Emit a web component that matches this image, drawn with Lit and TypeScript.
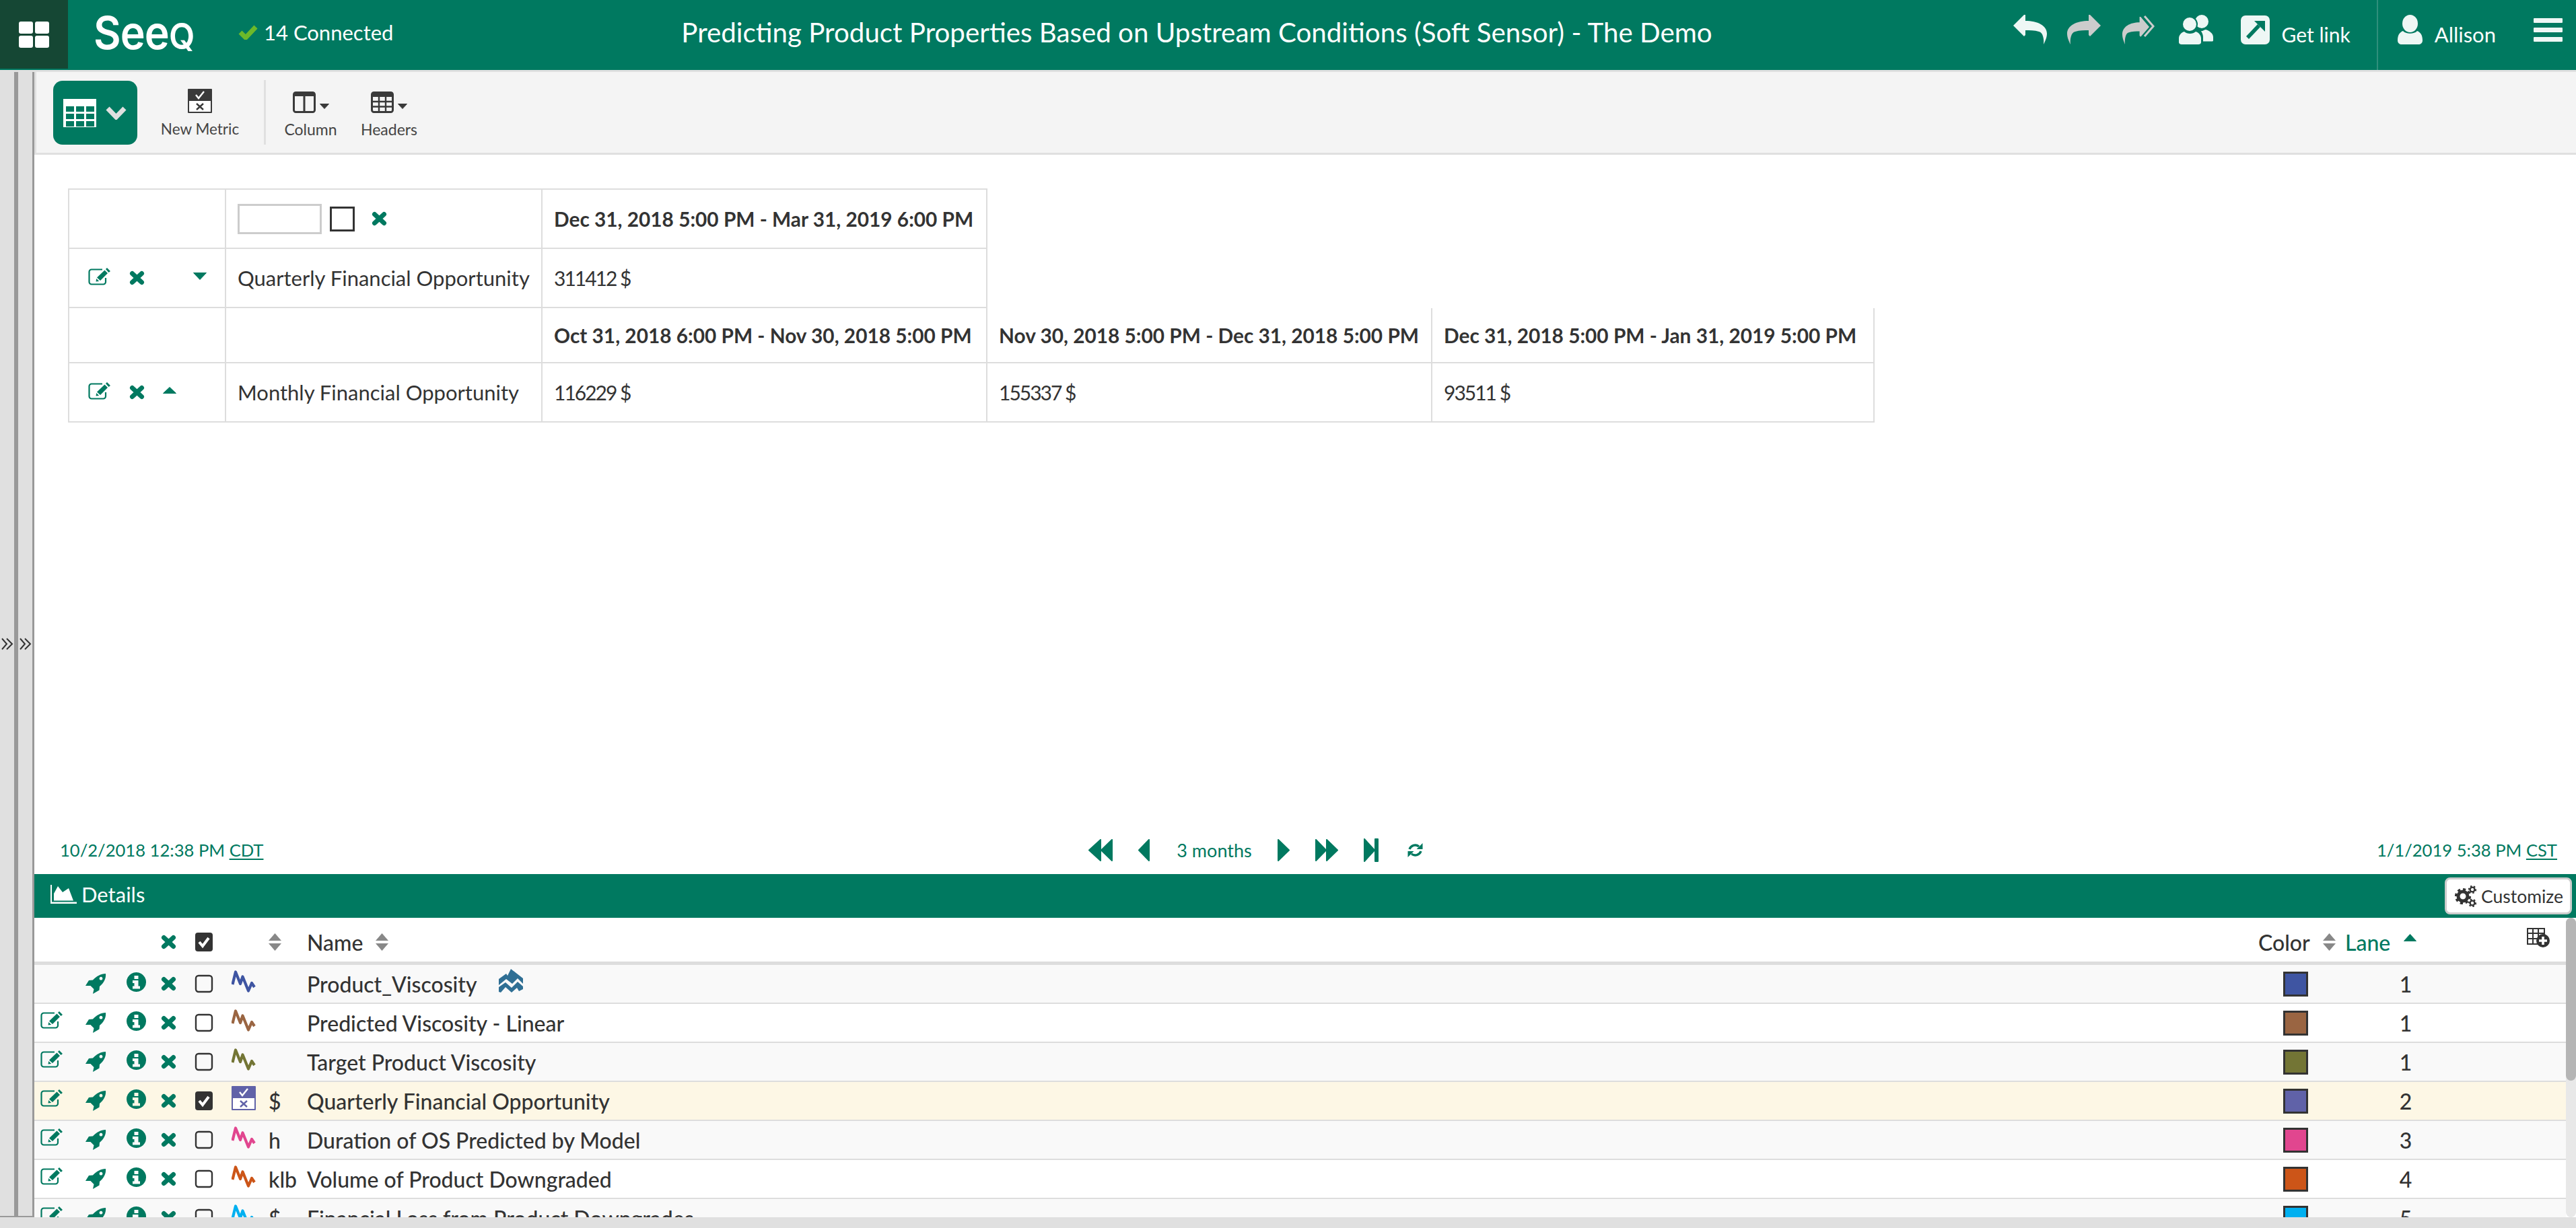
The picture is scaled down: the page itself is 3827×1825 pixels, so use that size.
import { LitElement, html, css, svg } from 'lit';
import { customElement } from 'lit/decorators.js';

const GREEN = '#007960';
const DARK = '#3a3a3a';

const icon = (w: number, h: number, body: unknown, cls = '') =>
  html`<svg class="ic ${cls}" width=${w} height=${h} viewBox="0 0 ${w} ${h}">${body}</svg>`;

const timesIcon = (cls = '') =>
  icon(23, 22, svg`<path d="M4.5 4.5 L18.5 17.5 M18.5 4.5 L4.5 17.5" stroke=${GREEN} stroke-width="7" stroke-linecap="round" fill="none"/>`, cls);

const editIcon = (cls = '') =>
  icon(34, 27, svg`
    <path d="M26 16 V22 a3.5 3.5 0 0 1 -3.5 3.5 H5 a3.5 3.5 0 0 1 -3.5 -3.5 V7 A3.5 3.5 0 0 1 5 3.5 H21" stroke=${GREEN} stroke-width="2.2" fill="none"/>
    <path d="M13 15.5 L24.5 4.5 L29 9 L18 20 Z M26 3 L28 1 L33 6 L30.5 8 Z M11.5 21.5 L12.2 17 L16.2 21 Z" fill=${GREEN}/>`, cls);

const rocketIcon = () =>
  icon(31, 30, svg`<path fill-rule="evenodd" fill=${GREEN} d="M30 0 C31 7 27 14 21 19 L20.5 24.5 L11 30 L12.5 23 L7.5 18 L0 18 L5 10 L11 9.5 C16 4 23 0 30 0 Z M23 4.8 a2.4 2.4 0 1 0 0.01 0 Z"/>`, 'rocket');

const infoIcon = () =>
  icon(29, 29, svg`<path fill-rule="evenodd" fill=${GREEN} d="M14.5 0 a14.5 14.5 0 1 0 0.01 0 Z M11.5 5 h6 v5 h-6 Z M9 12 h8.5 v8.5 h2.5 v4 H9 v-4 h2.5 v-4.5 H9 Z"/>`, 'info');

const checkbox = (checked: boolean, cls = '') =>
  icon(28, 28, checked
    ? svg`<rect x="1" y="0" width="26" height="28" rx="4" fill="#333"/><path d="M7 14 L12 20 L21 8" stroke="#fff" stroke-width="4" fill="none"/>`
    : svg`<rect x="2" y="2" width="24" height="24" rx="4" fill="none" stroke="#333" stroke-width="2.4"/>`, cls);

const signalIcon = (color: string) =>
  icon(36, 33, svg`<polyline points="1.5,21 6,2.5 13,20 16.5,9.5 25,30.5 30,19 34,25" fill="none" stroke=${color} stroke-width="4.2" stroke-linejoin="round"/>`, 'signal');

const metricIcon = (color: string, cls = 'signal') =>
  icon(36, 36, svg`
    <rect width="36" height="36" rx="1" fill=${color}/>
    <rect x="2" y="18" width="32" height="16" fill="#fff"/>
    <path d="M12 9 L16 14 L24 4" stroke="#fff" stroke-width="2.4" fill="none"/>
    <path d="M13 22 L23 31 M23 22 L13 31" stroke=${color} stroke-width="2.4" fill="none"/>`, cls);

const assetIcon = () =>
  icon(36, 35, svg`<path fill="#2f6f94" d="M0 15 L11 7 L13 10 L18 0 L27 7 L36 14 V22 L28 14 L20 22 L11 15 L0 24 Z M0 27 L10 20 L19 28 L28 19 L36 26 V30 L30 33 L27 28 L19 35 L10 27 L3 35 L0 34 Z"/>`, 'asset');

const sortIcon = (color = '#888') =>
  icon(19, 26, svg`<path fill=${color} d="M9.5 0 L19 11 H0 Z M0 15 H19 L9.5 26 Z"/>`, 'sort');

const caret = (w: number, h: number, up: boolean, color: string, cls = '') =>
  icon(w, h, svg`<path fill=${color} stroke=${color} stroke-width="1" stroke-linejoin="round" d=${up ? `M${w / 2} 0.5 L${w - 0.5} ${h - 0.5} H0.5 Z` : `M0.5 0.5 H${w - 0.5} L${w / 2} ${h - 0.5} Z`}/>`, cls);

const replyPath = 'M0 16 L16 0 H18 V9 C36 9 50 16 50 28 C50 34 47 40 45 44 C46 36 44 26 38 25 C32 23 24 23 18 23 V30 L16 32 Z';

const undoIcon = () => icon(50, 44, svg`<path fill="#eef7f5" d=${replyPath}/>`);
const redoIcon = () => icon(50, 44, svg`<path fill="#ccc" transform="translate(50 0) scale(-1 1)" d=${replyPath}/>`);
const forwardIcon = () =>
  icon(51, 44, svg`
    <path fill="#ccc" transform="translate(41 3) scale(-0.8 0.93)" d=${replyPath}/>
    <path fill="none" stroke="#ccc" stroke-width="3" d="M34 2 L47 17 L34 32"/>`, 'fwd');

const usersIcon = () =>
  icon(51, 44, svg`
    <circle cx="34" cy="10" r="10" fill="#eef7f5"/>
    <path fill="#eef7f5" d="M37 23 C38 22.5 38 22.5 40 22 C46 24 51 28 51 33 V38 C51 39 50 39.5 49 39.5 H36 V33 C36 29 34 26 33 24 C34 24 36 24 37 23 Z"/>
    <circle cx="16" cy="14" r="11" fill="#eef7f5" stroke=${GREEN} stroke-width="2"/>
    <path fill="#eef7f5" d="M0 41 V35 C0 30 4 26 8 25 C12 29 21 29 25 25 C29 26 33 30 33 35 V41 C33 43 31 44 29 44 H4 C2 44 0 43 0 41 Z"/>`, 'users');

const linkIcon = () =>
  icon(43, 43, svg`
    <rect width="43" height="43" rx="7" fill="#eef7f5"/>
    <path d="M10 33 L27 15" stroke=${GREEN} stroke-width="5.5"/>
    <path d="M20 8 H36 V24 Z" fill=${GREEN}/>`, 'linkic');

const userIcon = () =>
  icon(37, 44, svg`
    <ellipse cx="18.5" cy="13" rx="11.5" ry="13" fill="#eef7f5"/>
    <path fill="#eef7f5" d="M0 38 C0 30 3 26 8 24 C12 29 25 29 29 24 C34 26 37 30 37 38 C37 42 34 44 31 44 H6 C3 44 0 42 0 38 Z"/>`);

const barsIcon = () =>
  icon(43, 35, svg`<path fill="#eef7f5" d="M1 0 H42 a1 1 0 0 1 1 1 V6 a1 1 0 0 1 -1 1 H1 a1 1 0 0 1 -1 -1 V1 a1 1 0 0 1 1 -1 Z M1 14 H42 a1 1 0 0 1 1 1 V20 a1 1 0 0 1 -1 1 H1 a1 1 0 0 1 -1 -1 V15 a1 1 0 0 1 1 -1 Z M1 28 H42 a1 1 0 0 1 1 1 V34 a1 1 0 0 1 -1 1 H1 a1 1 0 0 1 -1 -1 V29 a1 1 0 0 1 1 -1 Z"/>`);

const gridIcon = () =>
  icon(45, 39, svg`
    <rect width="21" height="18" rx="3" fill="#fff"/><rect x="24" width="21" height="18" rx="3" fill="#fff"/>
    <rect y="21" width="21" height="18" rx="3" fill="#fff"/><rect x="24" y="21" width="21" height="18" rx="3" fill="#fff"/>`);

const tableViewIcon = () => {
  const cells = [];
  for (const y of [11, 22, 33]) for (const x of [4, 19, 34]) cells.push(svg`<rect x=${x} y=${y} width="12" height="8" fill=${GREEN}/>`);
  return icon(49, 42, svg`<rect width="49" height="42" fill="#fff"/>${cells}`);
};

const columnIcon = () =>
  icon(34, 32, svg`<rect x="1.5" y="1.5" width="31" height="29" rx="3" fill="none" stroke=${DARK} stroke-width="3"/>
    <rect x="1" y="1" width="32" height="6" rx="2" fill=${DARK}/><rect x="15.5" y="2" width="3" height="28" fill=${DARK}/>`);

const headersIcon = () =>
  icon(34, 32, svg`<rect x="1.5" y="1.5" width="31" height="29" rx="3" fill="none" stroke=${DARK} stroke-width="3"/>
    <rect x="1" y="1" width="32" height="7" rx="2" fill=${DARK}/>
    <path d="M12 2 V30 M22 2 V30 M2 15 H32 M2 22.5 H32" stroke=${DARK} stroke-width="2.4"/>`);

const addColumnIcon = () =>
  icon(34, 29, svg`
    <path d="M1 1 H26 V24 H1 Z M1 8 H26 M1 16 H26 M9 1 V24 M17 1 V24" fill="none" stroke="#333" stroke-width="2"/>
    <circle cx="24" cy="19" r="10" fill="#333"/>
    <path d="M24 13 V25 M18 19 H30" stroke="#fff" stroke-width="3.6"/>`, 'add');

const gearsIcon = () =>
  icon(32, 32, svg`
    <circle cx="12" cy="16" r="7" fill="none" stroke="#333" stroke-width="5"/>
    <circle cx="12" cy="16" r="10.5" fill="none" stroke="#333" stroke-width="3.2" stroke-dasharray="4.2 4"/>
    <circle cx="26" cy="6" r="3.4" fill="none" stroke="#333" stroke-width="2.4"/>
    <circle cx="26" cy="6" r="5.2" fill="none" stroke="#333" stroke-width="2" stroke-dasharray="2.4 2.8"/>
    <circle cx="26" cy="26" r="3.4" fill="none" stroke="#333" stroke-width="2.4"/>
    <circle cx="26" cy="26" r="5.2" fill="none" stroke="#333" stroke-width="2" stroke-dasharray="2.4 2.8"/>`);

const areaIcon = () =>
  icon(39, 28, svg`<path fill="#fff" d="M0 0 H2 V25.5 H39 V28 H0 Z M5 23.5 V13 L11 2 L18 11 L27 5 L34 23.5 Z"/>`, 'area');

const navShape = (w: number, h: number, d: string, cls = '') =>
  icon(w, h, svg`<path d=${d} fill=${GREEN} stroke=${GREEN} stroke-width="2" stroke-linejoin="round"/>`, cls);

const refreshIcon = () =>
  icon(23, 23, svg`
    <path d="M3 10 A9 9 0 0 1 17 6 M20 13 A9 9 0 0 1 6 17" fill="none" stroke=${GREEN} stroke-width="3.4"/>
    <path d="M22.5 1 V10 H13.5 Z M0.5 22 V13 H9.5 Z" fill=${GREEN}/>`);

const chevrons = () =>
  icon(18, 18, svg`<path d="M1 1 L8 9 L1 17 M8 1 L16 9 L8 17" fill="none" stroke="#333" stroke-width="2"/>`);

interface DetailRow {
  kind: 'signal' | 'metric';
  color: string;
  unit: string;
  name: string;
  lane: number;
  editable: boolean;
  checked?: boolean;
  asset?: boolean;
}

const ROWS: DetailRow[] = [
  { kind: 'signal', color: '#3f55a2', unit: '', name: 'Product_Viscosity', lane: 1, editable: false, asset: true },
  { kind: 'signal', color: '#9a6542', unit: '', name: 'Predicted Viscosity - Linear', lane: 1, editable: true },
  { kind: 'signal', color: '#737535', unit: '', name: 'Target Product Viscosity', lane: 1, editable: true },
  { kind: 'metric', color: '#6062a8', unit: '$', name: 'Quarterly Financial Opportunity', lane: 2, editable: true, checked: true },
  { kind: 'signal', color: '#e1468f', unit: 'h', name: 'Duration of OS Predicted by Model', lane: 3, editable: true },
  { kind: 'signal', color: '#cc5518', unit: 'klb', name: 'Volume of Product Downgraded', lane: 4, editable: true },
  { kind: 'signal', color: '#00b0f0', unit: '$', name: 'Financial Loss from Product Downgrades', lane: 5, editable: true },
];

@customElement('app-root')
export class AppRoot extends LitElement {
  static styles = css`
    :host {
      display: flex;
      flex-direction: column;
      width: 3827px;
      height: 1825px;
      overflow: hidden;
      background: #fff;
      color: #333;
      font-family: "Lato", "Noto Sans", sans-serif;
      font-size: 31px;
    }
    .ic {
      display: block;
      flex: none;
    }

    /* top bar */
    .topbar {
      display: grid;
      grid-template-columns: 600px 2356px 1fr;
      height: 104px;
      flex: none;
      background: #007960;
      color: #fff;
    }
    .topleft {
      display: flex;
      align-items: center;
    }
    .apps {
      display: flex;
      align-items: center;
      justify-content: center;
      width: 101px;
      height: 102px;
      align-self: flex-start;
      background: #154734;
    }
    .logo {
      width: 150px;
      margin-left: 38px;
      margin-bottom: 8px;
      font-family: "Inter", sans-serif;
      font-weight: 600;
      font-size: 68px;
      line-height: 1;
      letter-spacing: -1px;
      white-space: nowrap;
      transform: scaleX(0.92);
      transform-origin: left center;
    }
    .logo span {
      font-size: 54px;
      text-transform: uppercase;
    }
    .connected {
      display: flex;
      align-items: center;
      gap: 9px;
      margin-left: 65px;
      margin-bottom: 8px;
      font-size: 31px;
      white-space: nowrap;
    }
    .title {
      align-self: center;
      text-align: center;
      font-size: 40.3px;
      margin-bottom: 10px;
      white-space: nowrap;
    }
    .topright {
      display: flex;
      justify-content: flex-end;
      padding-right: 20px;
    }
    .actions {
      display: flex;
      align-items: center;
      gap: 30px;
      padding-bottom: 16px;
      box-sizing: border-box;
      height: 104px;
    }
    .fwd {
      margin-left: 1px;
    }
    .users {
      margin-left: 4px;
    }
    .linkic {
      margin-left: 11px;
    }
    .getlink {
      margin: 14px 39px 0 -12px;
      font-size: 30px;
      white-space: nowrap;
    }
    .account {
      display: flex;
      align-items: center;
      height: 104px;
      padding: 0 0 16px 29px;
      box-sizing: border-box;
      border-left: 2px solid #2f8f7c;
    }
    .username {
      margin: 14px 56px 0 18px;
      font-size: 31px;
      white-space: nowrap;
    }

    /* body */
    .body {
      display: flex;
      flex: 1;
      min-height: 0;
      border-top: 3px solid #e0e0e0;
    }
    .gutter {
      display: flex;
      flex: none;
      width: 51px;
      border-bottom: 2px solid #999;
    }
    .pane {
      display: flex;
      align-items: center;
      justify-content: center;
      width: 21px;
      background: #e0e0e0;
      border-right: 6px solid #999;
    }
    .pane + .pane {
      border-right-width: 3px;
    }
    .main {
      display: flex;
      flex-direction: column;
      flex: 1;
      min-width: 0;
    }
    .bottomstrip {
      flex: none;
      height: 16px;
      background: #e0e0e0;
    }

    /* toolbar */
    .toolbar {
      display: flex;
      flex: none;
      align-items: flex-start;
      height: 120px;
      padding-left: 25px;
      background: #f4f4f4;
      border-left: 3px solid #e0e0e0;
      border-bottom: 3px solid #e0e0e0;
    }
    .viewbtn {
      display: flex;
      align-items: center;
      gap: 14px;
      width: 125px;
      height: 95px;
      margin-top: 13px;
      padding-left: 15px;
      box-sizing: border-box;
      background: #007960;
      border-radius: 14px;
    }
    .tool {
      display: flex;
      flex-direction: column;
      align-items: center;
      margin-top: 26px;
      font-size: 23px;
      color: #444;
      white-space: nowrap;
    }
    .tool .glyph {
      display: flex;
      align-items: flex-end;
      gap: 6px;
      height: 35px;
      margin-bottom: 10px;
    }
    .tool .glyph .ic:nth-child(2) {
      margin-bottom: 6px;
    }
    .newmetric {
      width: 116px;
      margin-left: 35px;
      font-size: 22.5px;
    }
    .sep {
      width: 3px;
      height: 96px;
      margin: 12px 26px 0 37px;
      background: #e0e0e0;
    }
    .column {
      width: 81px;
    }
    .headers {
      width: 84px;
      margin-left: 34px;
    }

    /* metric tables */
    .content {
      flex: 1;
      min-height: 0;
      padding: 50px 0 0 50px;
    }
    .grid {
      display: grid;
      width: max-content;
      border-left: 2px solid #ddd;
    }
    .grid.first {
      grid-template-columns: 233px 470px 661px;
      grid-auto-rows: 88px;
      border-top: 2px solid #ddd;
    }
    .grid.second {
      grid-template-columns: 233px 470px 661px 661px 657px;
    }
    .cell {
      display: flex;
      align-items: center;
      padding-left: 17px;
      box-sizing: border-box;
      border-right: 2px solid #ddd;
      border-bottom: 2px solid #ddd;
      white-space: nowrap;
    }
    .cell.head {
      font-weight: 700;
      font-size: 29.8px;
    }
    .cell.num {
      font-size: 30px;
      letter-spacing: -2px;
    }
    .second .cell {
      height: 88px;
    }
    .second .cell.short {
      height: 82px;
    }
    .cell.ops {
      padding-left: 28px;
    }
    .ops .edit {
      margin: 0 27px 6px 0;
    }
    .ops .down {
      margin: 0 0 6px 72px;
    }
    .ops .up {
      margin: 0 0 6px 27px;
    }
    .rangeinput {
      width: 125px;
      height: 45px;
      box-sizing: border-box;
      border: 3px solid #ccc;
    }
    .rangecheck {
      width: 37px;
      height: 37px;
      margin: 0 25px 0 12px;
      box-sizing: border-box;
      border: 3px solid #333;
    }

    /* time bar */
    .timebar {
      display: grid;
      grid-template-columns: 1566px auto 1fr;
      align-items: center;
      flex: none;
      height: 69px;
      padding-bottom: 3px;
      box-sizing: border-box;
      color: #007960;
      font-size: 25.6px;
    }
    .timebar u {
      text-underline-offset: 3px;
    }
    .start {
      padding-left: 38px;
    }
    .end {
      padding-right: 28px;
      text-align: right;
    }
    .timenav {
      display: flex;
      align-items: center;
      gap: 38px;
    }
    .months {
      width: 116px;
      margin-right: -2px;
      font-size: 27px;
      text-align: center;
      white-space: nowrap;
    }
    .refreshwrap {
      margin-left: 5px;
    }

    /* details */
    .detailsbar {
      display: flex;
      flex: none;
      align-items: center;
      justify-content: space-between;
      height: 65px;
      padding: 0 6px 0 24px;
      box-sizing: border-box;
      background: #007960;
      color: #fff;
    }
    .detailslabel {
      display: flex;
      align-items: center;
      gap: 7px;
      margin-bottom: 6px;
      font-size: 31px;
    }
    .customize {
      display: flex;
      align-items: center;
      gap: 7px;
      width: 189px;
      height: 55px;
      padding-left: 12px;
      box-sizing: border-box;
      background: #fff;
      border: 3px solid #ccc;
      border-radius: 8px;
      color: #333;
      font-size: 26.5px;
      white-space: nowrap;
    }
    .detailsbody {
      display: flex;
      flex: none;
      height: 445px;
    }
    .detailstable {
      flex: 1;
      min-width: 0;
      overflow: hidden;
      font-size: 32px;
      font-weight: 500;
    }
    .scroll {
      flex: none;
      width: 15px;
      background: #e8e8e8;
      border-radius: 8px;
    }
    .scroll div {
      height: 242px;
      background: #b5b5b5;
      border-radius: 8px;
    }
    .dhead,
    .drow {
      display: grid;
      grid-template-columns: 76px 61px 51px 50px 55px 55px 57px 1fr 129px 180px 148px;
      align-items: center;
      box-sizing: border-box;
      white-space: nowrap;
    }
    .dhead {
      height: 70px;
      padding-top: 7px;
      border-bottom: 5px solid #ddd;
    }
    .drow {
      height: 58px;
      border-bottom: 2px solid #ddd;
      background: #fff;
    }
    .drow:nth-child(even) {
      background: #f9f9f9;
    }
    .drow.selected {
      background: #fdf7e5;
    }
    .drow > :first-child {
      padding-left: 9px;
    }
    .drow .edit {
      margin-bottom: 10px;
    }
    .drow .info {
      margin-bottom: 5px;
    }
    .drow .signal {
      margin-bottom: 8px;
    }
    .name {
      display: flex;
      align-items: center;
      gap: 32px;
    }
    .asset {
      margin-bottom: 10px;
    }
    .hname,
    .hcolor {
      display: flex;
      align-items: center;
      gap: 19px;
    }
    .hlane {
      display: flex;
      align-items: center;
      gap: 20px;
      color: #007960;
    }
    .hlane .ic {
      margin-bottom: 14px;
    }
    .add {
      margin: 0 0 14px 90px;
    }
    .swatch {
      width: 37px;
      height: 37px;
      margin-left: 37px;
      box-sizing: border-box;
      border: 3px solid #333;
    }
    .lane {
      text-align: center;
    }
  `;

  renderRow(row: DetailRow) {
    return html`
      <div class="drow ${row.checked ? 'selected' : ''}">
        <div>${row.editable ? editIcon('edit') : ''}</div>
        <div>${rocketIcon()}</div>
        <div>${infoIcon()}</div>
        <div>${timesIcon()}</div>
        <div>${checkbox(!!row.checked)}</div>
        <div>${row.kind === 'metric' ? metricIcon(row.color) : signalIcon(row.color)}</div>
        <div>${row.unit}</div>
        <div class="name">${row.name}${row.asset ? assetIcon() : ''}</div>
        <div><div class="swatch" style="background:${row.color}"></div></div>
        <div class="lane">${row.lane}</div>
        <div></div>
      </div>
    `;
  }

  render() {
    return html`
      <div class="topbar">
        <div class="topleft">
          <div class="apps">${gridIcon()}</div>
          <div class="logo">See<span>q</span></div>
          <div class="connected">
            ${icon(29, 22, svg`<path d="M3 11 L11 19 L26 3" fill="none" stroke="#6cb92a" stroke-width="7"/>`)}
            14 Connected
          </div>
        </div>
        <div class="title">Predicting Product Properties Based on Upstream Conditions (Soft Sensor) - The Demo</div>
        <div class="topright">
          <div class="actions">
            ${undoIcon()}${redoIcon()}${forwardIcon()}${usersIcon()}${linkIcon()}
            <div class="getlink">Get link</div>
          </div>
          <div class="account">
            ${userIcon()}
            <div class="username">Allison</div>
            ${barsIcon()}
          </div>
        </div>
      </div>

      <div class="body">
        <div class="gutter">
          <div class="pane">${chevrons()}</div>
          <div class="pane">${chevrons()}</div>
        </div>
        <div class="main">
          <div class="toolbar">
            <div class="viewbtn">
              ${tableViewIcon()}
              ${icon(31, 20, svg`<path d="M3 3 L15.5 16 L28 3" fill="none" stroke="#e0e0e0" stroke-width="7"/>`)}
            </div>
            <div class="tool newmetric">
              <div class="glyph">${metricIcon(DARK, '')}</div>
              New Metric
            </div>
            <div class="sep"></div>
            <div class="tool column">
              <div class="glyph">${columnIcon()}${caret(14, 8, false, DARK)}</div>
              Column
            </div>
            <div class="tool headers">
              <div class="glyph">${headersIcon()}${caret(14, 8, false, DARK)}</div>
              Headers
            </div>
          </div>

          <div class="content">
            <div class="grid first">
              <div class="cell"></div>
              <div class="cell">
                <div class="rangeinput"></div>
                <div class="rangecheck"></div>
                ${timesIcon()}
              </div>
              <div class="cell head">Dec 31, 2018 5:00 PM - Mar 31, 2019 6:00 PM</div>
              <div class="cell ops">${editIcon('edit')}${timesIcon()}${caret(20, 11, false, GREEN, 'down')}</div>
              <div class="cell">Quarterly Financial Opportunity</div>
              <div class="cell num">311412 $</div>
            </div>
            <div class="grid second">
              <div class="cell short"></div>
              <div class="cell short"></div>
              <div class="cell short head">Oct 31, 2018 6:00 PM - Nov 30, 2018 5:00 PM</div>
              <div class="cell short head">Nov 30, 2018 5:00 PM - Dec 31, 2018 5:00 PM</div>
              <div class="cell short head">Dec 31, 2018 5:00 PM - Jan 31, 2019 5:00 PM</div>
              <div class="cell ops">${editIcon('edit')}${timesIcon()}${caret(20, 10, true, GREEN, 'up')}</div>
              <div class="cell">Monthly Financial Opportunity</div>
              <div class="cell num">116229 $</div>
              <div class="cell num">155337 $</div>
              <div class="cell num">93511 $</div>
            </div>
          </div>

          <div class="timebar">
            <div class="start">10/2/2018 12:38 PM <u>CDT</u></div>
            <div class="timenav">
              ${navShape(36, 33, 'M18 1 V32 L1 16.5 Z M35 1 V32 L19 16.5 Z')}
              ${navShape(17, 33, 'M16 1 V32 L1 16.5 Z')}
              <div class="months">3 months</div>
              ${navShape(18, 33, 'M1 1 V32 L17 16.5 Z')}
              ${navShape(34, 33, 'M1 1 V32 L16 16.5 Z M17 1 V32 L33 16.5 Z')}
              ${navShape(22, 35, 'M1 1 V34 L16 17.5 Z M17 1 H21 V34 H17 Z')}
              <div class="refreshwrap">${refreshIcon()}</div>
            </div>
            <div class="end">1/1/2019 5:38 PM <u>CST</u></div>
          </div>

          <div class="detailsbar">
            <div class="detailslabel">${areaIcon()}Details</div>
            <div class="customize">${gearsIcon()}Customize</div>
          </div>
          <div class="detailsbody">
            <div class="detailstable">
              <div class="dhead">
                <div></div><div></div><div></div>
                <div>${timesIcon()}</div>
                <div>${checkbox(true)}</div>
                <div></div>
                <div>${sortIcon()}</div>
                <div class="hname">Name ${sortIcon()}</div>
                <div class="hcolor">Color ${sortIcon()}</div>
                <div class="hlane">Lane ${caret(19, 11, true, GREEN)}</div>
                <div>${addColumnIcon()}</div>
              </div>
              ${ROWS.map((row) => this.renderRow(row))}
            </div>
            <div class="scroll"><div></div></div>
          </div>
        </div>
      </div>
      <div class="bottomstrip"></div>
    `;
  }
}
